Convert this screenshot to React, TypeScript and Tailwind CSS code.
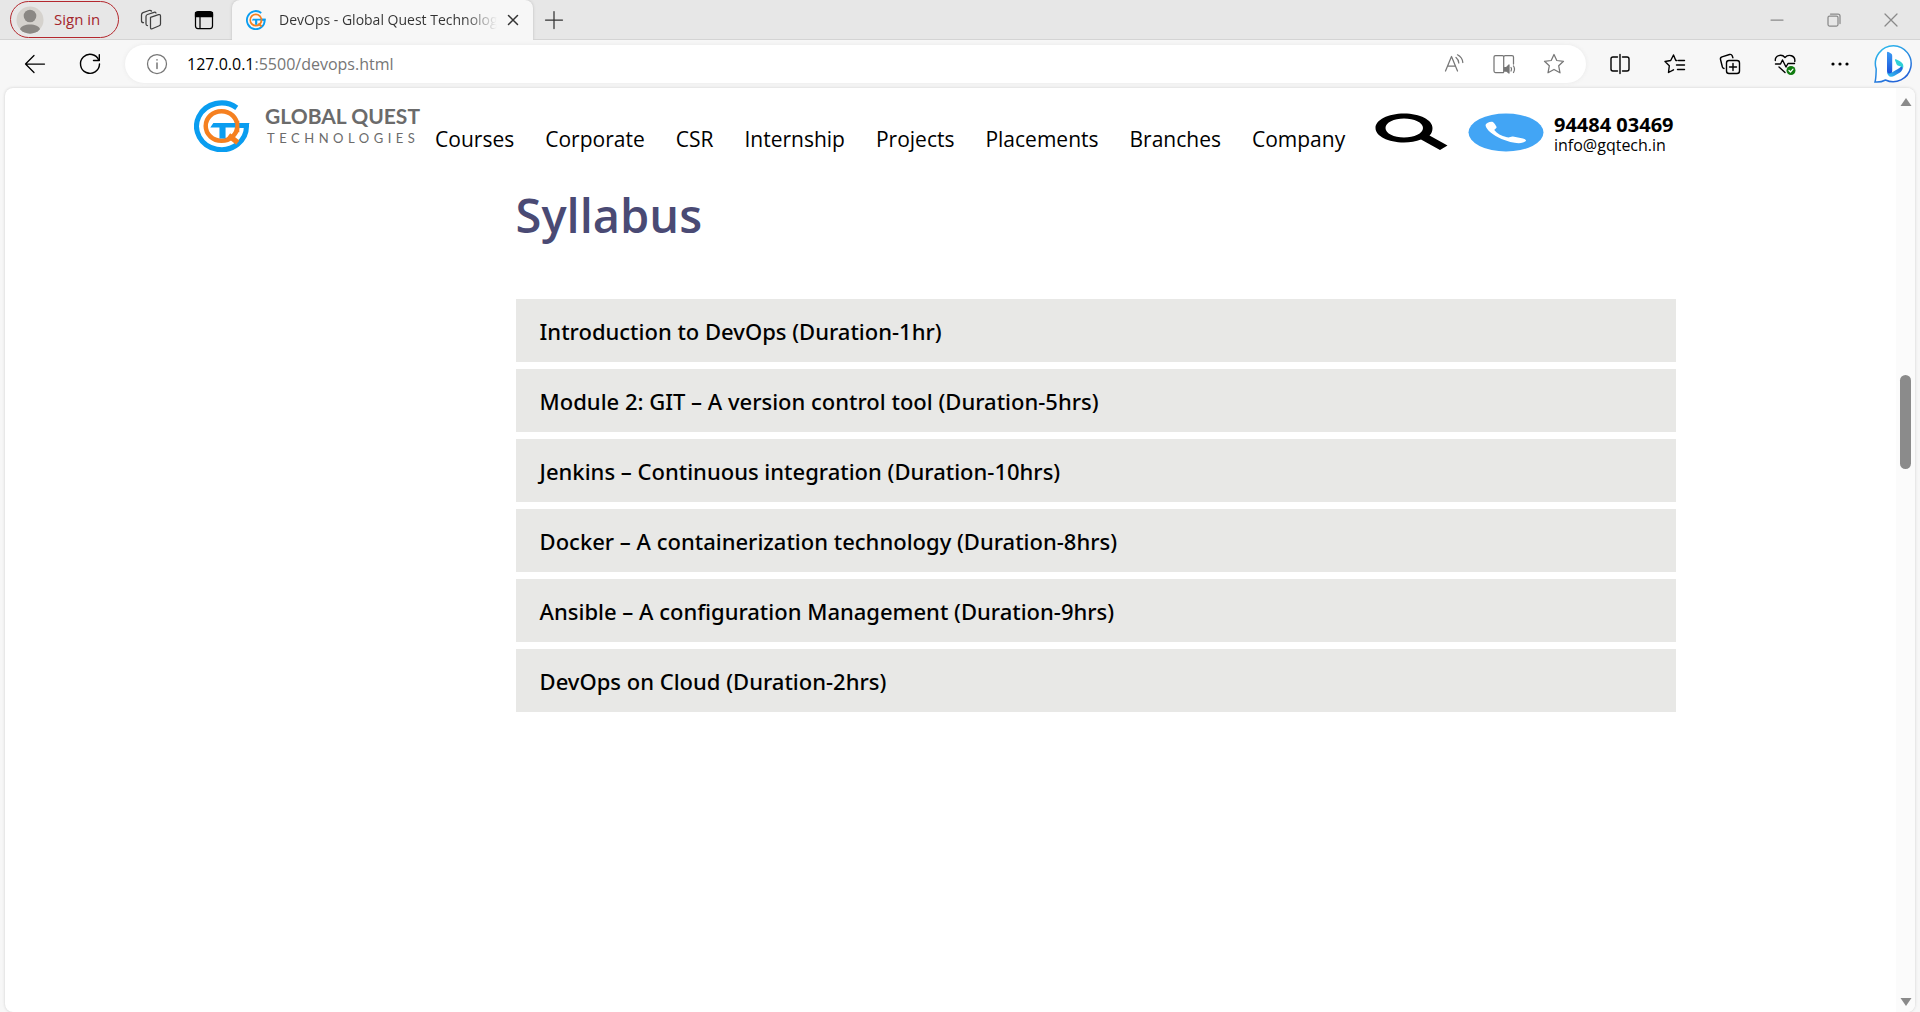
import React from 'react';

type IconProps = { children: React.ReactNode; className?: string };

/** 24x24 line icon. */
function Icon({ children, className = '' }: IconProps) {
  return (
    <svg
      viewBox="0 0 24 24"
      className={`size-6 shrink-0 ${className}`}
      fill="none"
      stroke="currentColor"
      strokeWidth="1.25"
      strokeLinecap="round"
      strokeLinejoin="round"
      aria-hidden="true"
    >
      {children}
    </svg>
  );
}

function BrandMark({ className = '' }: { className?: string }) {
  return (
    <svg viewBox="1 0 55 50" className={className} fill="none" preserveAspectRatio="none" aria-hidden="true">
      <path d="M43 7.5 A24.5 22.5 0 1 0 52.5 24.5 H44" stroke="#0a9df0" strokeWidth="5" />
      <ellipse cx="28" cy="25" rx="15.5" ry="14.2" stroke="#f58020" strokeWidth="4.4" />
      <path d="M35 34 L44 41" stroke="#f58020" strokeWidth="5" />
      <path d="M17 26.5 L20 22 H55.5 L54 26.5 H32 V37 H26 V26.5 Z" fill="#0a9df0" />
      <path d="M43.5 20 V31" stroke="#f58020" strokeWidth="4" />
    </svg>
  );
}

function BingMark() {
  return (
    <svg viewBox="0 0 40 40" className="size-10" aria-hidden="true">
      <defs>
        <linearGradient id="ring" x1="0" y1="0" x2="0.6" y2="1">
          <stop offset="0" stopColor="#2fc3ee" />
          <stop offset="1" stopColor="#2463d8" />
        </linearGradient>
        <linearGradient id="stem" x1="0" y1="0" x2="0" y2="1">
          <stop offset="0" stopColor="#3b9cf5" />
          <stop offset="1" stopColor="#1a4fd8" />
        </linearGradient>
        <linearGradient id="bowl" x1="0" y1="1" x2="1" y2="0">
          <stop offset="0" stopColor="#35c8f2" />
          <stop offset="1" stopColor="#1d4fd8" />
        </linearGradient>
      </defs>
      <path
        d="M20.5 1.7 A18 18 0 1 1 12.5 36 C9 37.8 5 38.3 2 38 C3 35 3 31 3.2 25 A18 18 0 0 1 20.5 1.7 Z"
        fill="#fff"
        stroke="url(#ring)"
        strokeWidth="1.5"
      />
      <path d="M14 8.5 C14 7.5 15 7.5 16 8.2 L18 9.6 C19 10.3 19.2 11 19.2 12 V27 C19.2 31 14 32 14 27 Z" fill="url(#stem)" />
      <path d="M14 27 C14 32.5 18 34 21.5 31.8 L27 28.5 C30 26.5 31 22 28.5 20 C29 23 26 24.5 23 26 L18 29 C16 30 14 29.5 14 27 Z" fill="url(#bowl)" />
      <path d="M22 16.2 C21.7 15 22.5 15 23.5 15.4 L27 17.3 C30 19 31 21.5 30 24.5 C29 22.5 27.5 22.5 25.5 21.8 C23.6 21 23.5 20 22 16.2 Z" fill="#2fd0d6" />
    </svg>
  );
}

function TabStrip() {
  return (
    <div className="flex h-10 items-stretch bg-[#e7e7e7]">
      <div className="flex w-[232px] shrink-0 items-center border-b border-[#d4d4d4] pl-[10px]">
        <button className="flex h-[37px] w-[109px] shrink-0 items-center gap-[10px] rounded-full border border-[#b4282e] pl-[5px] text-[15px] text-[#a4262c]">
          <svg viewBox="0 0 28 28" className="size-7 shrink-0" aria-hidden="true">
            <circle cx="14" cy="14" r="13.5" fill="#d5d2cd" />
            <circle cx="14" cy="10" r="6.3" fill="#8b8884" />
            <path d="M4 23.3 C5 16.8 23 16.8 24 23.3 A13.5 13.5 0 0 1 4 23.3 Z" fill="#8b8884" />
          </svg>
          Sign in
        </button>
        <button aria-label="Workspaces" className="ml-5 text-[#404040]">
          <Icon>
            <path d="M11.5 9.3 L19.5 6.7 Q21.5 6.2 21.5 8.2 V16 Q21.5 17.3 20.3 17.7 L13.2 20.8 Q11.5 21.5 11.5 19.5 Z" />
            <path d="M8.5 17.5 Q7 17.5 7 16 V8.5 Q7 7 8.5 6.5 L15 4.3 Q16.5 4 17 5" />
            <path d="M4.5 14.7 Q2.5 14.7 2.5 12.7 V7 Q2.5 5.3 4 4.7 L10 2.5 Q11.5 2 12.5 3" />
          </Icon>
        </button>
        <button aria-label="Tab actions" className="ml-[29px] text-black">
          <Icon>
            <rect x="3.5" y="3.5" width="17" height="17" rx="2.5" />
            <path d="M3.5 4.5 H20.5 V8.5 H3.5 Z" fill="currentColor" />
            <path d="M8 9 V20" />
          </Icon>
        </button>
      </div>
      <div className="flex w-[301px] shrink-0 items-center rounded-t-lg bg-[#f7f7f7] pl-[14px] text-[#333] shadow-[0_0_3px_#bbb]">
        <BrandMark className="h-5 w-5 shrink-0" />
        <span className="ml-[13px] w-[218px] shrink-0 overflow-hidden bg-linear-to-r from-[#333] from-85% to-transparent bg-clip-text text-sm whitespace-nowrap text-transparent">
          DevOps - Global Quest Technologies
        </span>
        <button aria-label="Close tab" className="ml-1">
          <Icon>
            <path d="M7.5 7.5 L16.5 16.5 M16.5 7.5 L7.5 16.5" strokeWidth="1.5" />
          </Icon>
        </button>
      </div>
      <div className="flex flex-1 items-center border-b border-[#d4d4d4] pl-[9px]">
        <button aria-label="New tab" className="text-[#333]">
          <Icon>
            <path d="M12 3.5 V20.5 M3.5 12 H20.5" />
          </Icon>
        </button>
        <div className="ml-auto flex gap-[33px] pr-[17px] text-[#8a8a8a]">
          <button aria-label="Minimize">
            <Icon>
              <path d="M6 12 H18" />
            </Icon>
          </button>
          <button aria-label="Restore">
            <Icon>
              <rect x="6" y="8" width="10" height="10" rx="1.5" />
              <path d="M8.5 6 H16 Q18 6 18 8 V15.5" />
            </Icon>
          </button>
          <button aria-label="Close window">
            <Icon>
              <path d="M6 6 L18 18 M18 6 L6 18" />
            </Icon>
          </button>
        </div>
      </div>
    </div>
  );
}

function Toolbar() {
  return (
    <div className="flex h-12 items-center bg-[#f7f7f7] pr-[7px] pl-[23px] text-black">
      <button aria-label="Back">
        <Icon>
          <path d="M21.5 12 H2.5 M11 3.5 L2.5 12 L11 20.5" />
        </Icon>
      </button>
      <button aria-label="Refresh" className="ml-[31px]">
        <Icon>
          <path d="M20.8 8.2 A9.5 9.5 0 1 0 21.5 12" strokeWidth="1.4" />
          <path d="M21.3 2.8 V8.5 H15.5" strokeWidth="1.4" />
        </Icon>
      </button>
      <div className="ml-[23px] flex h-[38px] flex-1 items-center rounded-full bg-white pr-5 pl-5 text-[#767676] shadow-[0_0_4px_#e8e8e8]">
        <button aria-label="Site information">
          <Icon>
            <circle cx="12" cy="12" r="9.5" />
            <path d="M12 11 V16.5 M12 7.8 V8" strokeWidth="1.5" />
          </Icon>
        </button>
        <p className="ml-[18px] flex-1 text-base text-[#767676]">
          <span className="text-black">127.0.0.1</span>:5500/devops.html
        </p>
        <div className="flex gap-[26px]">
          <button aria-label="Read aloud">
            <Icon>
              <path d="M3.5 19 L9.5 4.5 L15.5 19 M5.5 14 H13.5" />
              <path d="M14 5.5 Q16.5 7.5 16.8 11 M15.5 2.8 Q20.5 5.5 20.8 10.5" />
            </Icon>
          </button>
          <button aria-label="Immersive reader">
            <Icon>
              <path d="M11.5 20.5 H3.5 Q2 20.5 2 19 V5 Q2 3.5 3.5 3.5 H10.5 Q11.7 3.5 11.7 5 V20 M11.7 5 Q11.7 3.5 13.2 3.5 H20 Q21.5 3.5 21.5 5 V12" />
              <path d="M12.5 15.5 H14.5 L17 13 V21 L14.5 19 H12.5 Z" fill="currentColor" />
              <path d="M19 15.5 Q20 17 19 19 M21.5 14 Q23.5 17 21.5 20.5" />
            </Icon>
          </button>
          <button aria-label="Add to favorites">
            <Icon>
              <path d="M12 2.5 L14.8 8.5 L21.5 9.3 L16.7 13.8 L18 20.8 L12 17.5 L6 20.8 L7.3 13.8 L2.5 9.3 L9.2 8.5 Z" />
            </Icon>
          </button>
        </div>
      </div>
      <div className="ml-[22px] flex items-center gap-[31px]">
        <button aria-label="Split screen">
          <Icon>
            <path d="M9.5 5 H5 Q3 5 3 7 V17 Q3 19 5 19 H9.5 M14.5 5 H19 Q21 5 21 7 V17 Q21 19 19 19 H14.5 M12 2.5 V21.5" strokeWidth="1.4" />
          </Icon>
        </button>
        <button aria-label="Favorites">
          <Icon>
            <path d="M14 8.5 H12.8 L10.5 3 L7.7 8.5 L2 9.5 L6.3 13.8 L5.5 20.5 L10.5 17.8 M15.5 8.5 H21.5 M13.5 13 H21.5 M14.5 17.5 H21.5" strokeWidth="1.4" />
          </Icon>
        </button>
        <button aria-label="Collections">
          <Icon>
            <rect x="8.5" y="8.5" width="13" height="13" rx="2.5" strokeWidth="1.4" />
            <path d="M15 11.5 V18.5 M11.5 15 H18.5" strokeWidth="1.4" />
            <path d="M6 16.5 Q4.8 16.3 4.4 15 L2.5 7.5 Q2 5.5 4 4.8 L11.5 2.5 Q13.5 2 14.2 3.8 L14.9 5.8" strokeWidth="1.4" />
          </Icon>
        </button>
        <button aria-label="Browser essentials">
          <Icon>
            <path d="M2.3 8.5 C2 3.5 8.5 1.5 12 5.5 C15.5 1.5 22.5 3.5 21.8 9.5 M2.5 12 H7.5 L9.5 8 L13 15 L15 11.5 H21.5 M6 15 L12 20.5" strokeWidth="1.4" />
            <circle cx="18" cy="18.5" r="4.5" fill="#107c10" stroke="none" />
            <path d="M16 18.5 L17.5 20 L20 17.2" stroke="#fff" />
          </Icon>
        </button>
        <button aria-label="Settings and more">
          <Icon>
            <g fill="currentColor" stroke="none">
              <circle cx="5" cy="12" r="1.6" />
              <circle cx="12" cy="12" r="1.6" />
              <circle cx="19" cy="12" r="1.6" />
            </g>
          </Icon>
        </button>
      </div>
      <button aria-label="Bing chat" className="ml-[21px]">
        <BingMark />
      </button>
    </div>
  );
}

const links = ['Courses', 'Corporate', 'CSR', 'Internship', 'Projects', 'Placements', 'Branches', 'Company'];

function SiteHeader() {
  return (
    <header className="flex items-start pt-3 pr-[220px] pl-[10%] text-black">
      <a href="#home" className="flex shrink-0 items-start gap-[15px]" aria-label="Global Quest Technologies">
        <BrandMark className="h-[52px] w-14" />
        <span className="w-[154px] pt-1 font-['Lato',sans-serif] whitespace-nowrap text-[#6b6b6b]">
          <span className="block text-[21px] leading-6 font-bold">GLOBAL QUEST</span>
          <span className="block pl-[2px] text-[13px] leading-5 tracking-[4.5px]">TECHNOLOGIES</span>
        </span>
      </a>
      <nav className="ml-4 flex shrink-0 gap-[31px] pt-[22px] text-[21px] leading-[34px]">
        {links.map((label) => (
          <a key={label} href={`#${label.toLowerCase()}`}>
            {label}
          </a>
        ))}
      </nav>
      <button aria-label="Search" className="ml-auto shrink-0 pt-[13px]">
        <svg viewBox="0 0 73 38" className="h-[38px] w-[73px]" aria-hidden="true">
          <path
            fillRule="evenodd"
            d="M29 0.5 C45 0.5 57.5 7 57.5 15 C57.5 18 56.5 20.5 54.5 22.5 L72.5 32.5 L65 37 L46 26.5 C41 28.6 35 29.5 29 29.5 C13 29.5 0.5 23 0.5 15 C0.5 7 13 0.5 29 0.5 Z M29 5.5 C19 5.5 10.5 9.5 10.5 15 C10.5 20.5 19 24.5 29 24.5 C39 24.5 48 20.5 48 15 C48 9.500 39 5.5 29 5.5 Z"
          />
        </svg>
      </button>
      <a href="tel:9448403469" aria-label="Call us" className="ml-5 shrink-0 pt-[13px]">
        <svg viewBox="0 0 76 39" className="h-[39px] w-[76px]" aria-hidden="true">
          <ellipse cx="38" cy="19.5" rx="37.5" ry="19" fill="#42a5f5" />
          <path
            d="M17.5 12 C18 10 21 8.8 23.5 8.7 C25.8 8.7 27.3 11.5 28.5 13.8 C29.2 15.5 26 16 26.5 17.3 C29 20.5 33 23 39 24.3 C42 24.8 42.5 23.3 45 23.6 L55 25.6 C59.5 26.8 58.5 28.3 55 29.5 C50 31.3 41 29 33.5 26 C25.5 22.5 18 17 17.5 12 Z"
            fill="#fff"
          />
        </svg>
      </a>
      <address className="ml-[10px] w-[122px] shrink-0 pt-[15px] whitespace-nowrap not-italic">
        <a href="tel:9448403469" className="block text-xl leading-5 font-bold">94484 03469</a>
        <a href="mailto:info@gqtech.in" className="block text-base leading-5">info@gqtech.in</a>
      </address>
    </header>
  );
}

const modules = [
  'Introduction to DevOps (Duration-1hr)',
  'Module 2: GIT – A version control tool (Duration-5hrs)',
  'Jenkins – Continuous integration (Duration-10hrs)',
  'Docker – A containerization technology (Duration-8hrs)',
  'Ansible – A configuration Management (Duration-9hrs)',
  'DevOps on Cloud (Duration-2hrs)',
];

function Syllabus() {
  return (
    <main className="pt-[23px] pr-[220px] pl-[27%]">
      <h1 className="text-[47px] leading-[72px] font-semibold text-[#4a4a74]">Syllabus</h1>
      <div className="mt-12 flex flex-col gap-[7px]">
        {modules.map((title) => (
          <button
            key={title}
            className="h-[63px] w-full bg-[#e8e8e6] px-6 pt-px text-left font-['Noto_Sans',sans-serif] text-[22px] font-medium text-black"
          >
            {title}
          </button>
        ))}
      </div>
    </main>
  );
}

function Scrollbar() {
  return (
    <div className="flex w-[19px] shrink-0 flex-col items-center bg-[#fbfbfb] pt-[9px] pb-[5px]">
      <svg viewBox="0 0 12 10" className="h-[10px] w-3" aria-hidden="true">
        <path d="M6 1 L11.5 9 H0.5 Z" fill="#8a8a8a" />
      </svg>
      <div className="grow-[34] basis-0" />
      <div className="h-[94px] w-[11px] rounded-full bg-[#8b8b8b]" />
      <div className="grow-[67] basis-0" />
      <svg viewBox="0 0 12 10" className="h-[10px] w-3" aria-hidden="true">
        <path d="M6 9 L11.5 1 H0.5 Z" fill="#8a8a8a" />
      </svg>
    </div>
  );
}

export default function App() {
  return (
    <div className="flex min-h-screen flex-col bg-[#f7f7f7] font-['Open_Sans',sans-serif]">
      <TabStrip />
      <Toolbar />
      <div className="mx-[5px] flex flex-1 overflow-hidden rounded-lg bg-white shadow-[0_0_3px_#ccc]">
        <div className="min-w-0 flex-1">
          <SiteHeader />
          <Syllabus />
        </div>
        <Scrollbar />
      </div>
    </div>
  );
}
